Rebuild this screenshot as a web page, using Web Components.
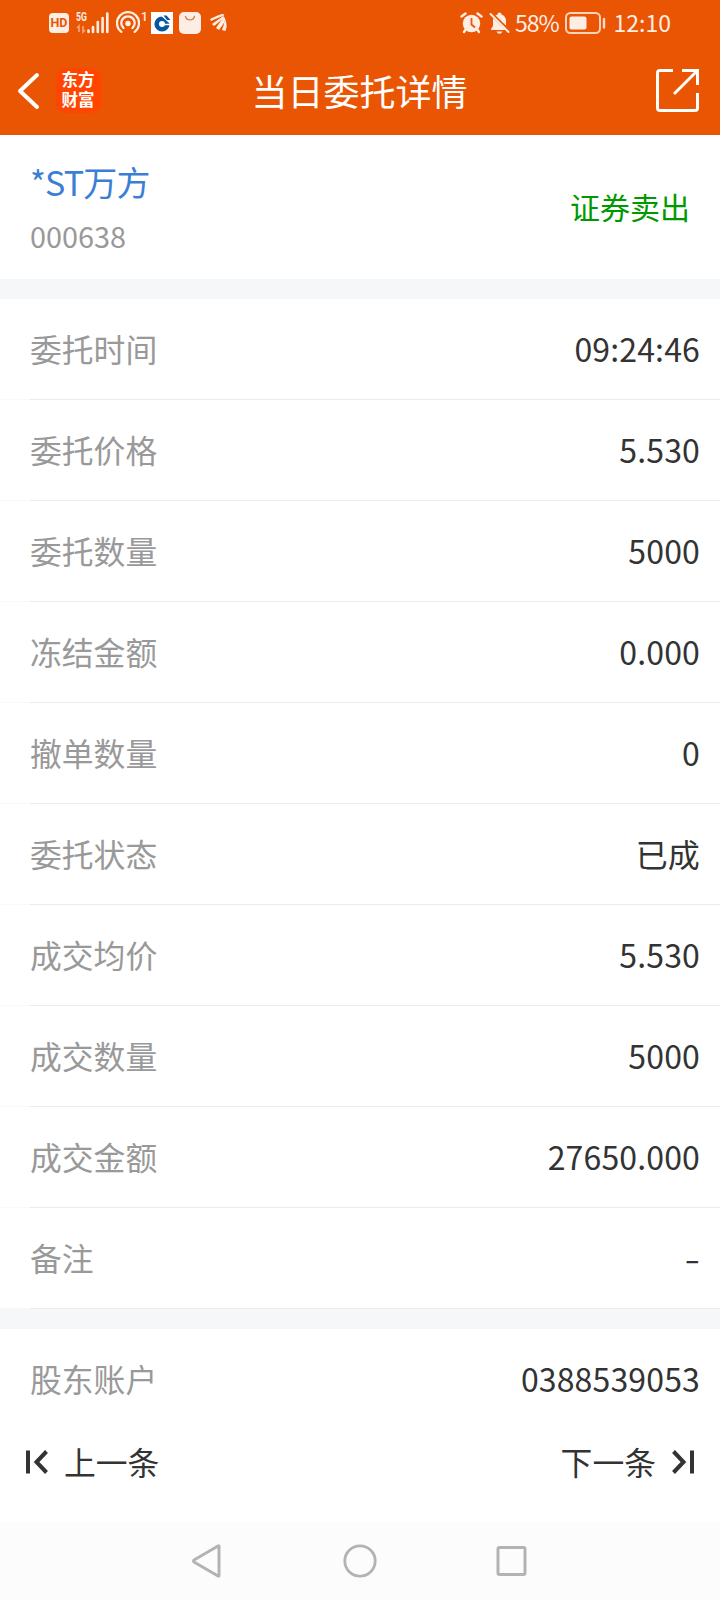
<!DOCTYPE html>
<html lang="zh-CN">
<head>
<meta charset="UTF-8">
<meta name="viewport" content="width=device-width, initial-scale=1.0">
<title>当日委托详情</title>
<style>
    body {
        margin: 0;
        background: #fff;
        color: #333;
        font-family: "Noto Sans CJK SC", "Noto Sans", sans-serif;
    }
</style>
</head>
<body>
<order-page>
    <status-bar slot="top" battery="58%" time="12:10"></status-bar>
    <title-bar slot="top">当日委托详情</title-bar>
    <stock-summary name="*ST万方" code="000638">证券卖出</stock-summary>
    <detail-group id="order"></detail-group>
    <detail-group id="account"></detail-group>
    <pager-bar slot="bottom"></pager-bar>
    <system-nav slot="bottom"></system-nav>
</order-page>

<script>
class OrderPage extends HTMLElement {
    constructor() {
        super();
        this.attachShadow({ mode: 'open' });
        this.shadowRoot.innerHTML = `
            <style>
                :host {
                    display: flex;
                    flex-direction: column;
                    height: 1600px;
                    overflow: hidden;
                }
                header { background: #ea5504; }
                main {
                    flex: 1;
                    min-height: 0;
                    display: flex;
                    flex-direction: column;
                    gap: 20px;
                    background: #f6f7f9;
                    overflow: hidden;
                }
            </style>
            <header><slot name="top"></slot></header>
            <main><slot></slot></main>
            <footer><slot name="bottom"></slot></footer>
        `;
    }
}

class StatusBar extends HTMLElement {
    connectedCallback() {
        this.attachShadow({ mode: 'open' });
        this.shadowRoot.innerHTML = `
            <style>
                :host {
                    display: flex;
                    justify-content: space-between;
                    align-items: center;
                    box-sizing: border-box;
                    height: 46px;
                    padding: 0 49px;
                    color: #fdeee5;
                    font-size: 23px;
                    line-height: 44px;
                }
                .group { display: flex; align-items: center; height: 46px; }
                svg { display: block; flex: none; }
                .hd {
                    width: 20px;
                    height: 20px;
                    border-radius: 4px;
                    background: #fdeee5;
                    color: #ea5504;
                    font: 700 12.5px/20px Roboto, sans-serif;
                    text-align: center;
                }
                .signal { display: flex; margin-left: 7px; width: 33px; height: 22px; }
                .net {
                    width: 11px;
                    font: 700 12px/10px Roboto, sans-serif;
                    transform: scaleX(.72);
                    transform-origin: left;
                }
                .net + svg { margin-left: -11px; }
                .one {
                    align-self: flex-start;
                    width: 6px;
                    margin: 11px 0 0 1px;
                    font: 500 12px/12px Roboto, sans-serif;
                }
                .battery-text { margin-left: 5px; letter-spacing: -1.1px; height: 46px; }
                .time { margin-left: 8px; height: 46px; }
            </style>
            <div class="group">
                <span class="hd">HD</span>
                <span class="signal">
                    <span class="net">5G</span>
                    <svg width="33" height="22" viewBox="0 0 33 22">
                        <path d="M3 20v-6l-2 2M7 14v6l2-2" fill="none" stroke="#f5a578" stroke-width="1.6"/>
                        <path d="M12.5 18.5v1.500M17 15v5M21.800 10v10M26.600 6v14M31.300 1.500v18.500" stroke="#fdeee5" stroke-width="2.600" stroke-linecap="round"/>
                    </svg>
                </span>
                <svg width="24" height="24" viewBox="0 0 24 24" style="margin-left:7px" fill="none" stroke="#fdeee5" stroke-width="2.300" stroke-linecap="round">
                    <path d="M5.300 20.800A11 11 0 1 1 18.700 20.800M7.500 17A6.700 6.700 0 1 1 16.500 17"/>
                    <circle cx="12" cy="12.500" r="2.700" fill="#fdeee5" stroke="none"/>
                </svg>
                <span class="one">1</span>
                <svg width="22" height="22" viewBox="0 0 22 22" style="margin-left:4px">
                    <path fill="#fff" d="M0 0h22v22H0z"/>
                    <circle cx="11" cy="12" r="5.300" fill="none" stroke="#0757a0" stroke-width="4.600"/>
                    <path d="M10 2l11 10" stroke="#fff" stroke-width="2.400"/>
                    <path d="M12.500 3.500h3l4 4.500h-3.500z" fill="#0757a0"/>
                    <path d="M14 12.500h6" stroke="#fff" stroke-width="1.500"/>
                </svg>
                <svg width="22" height="22" viewBox="0 0 22 22" style="margin-left:6px">
                    <rect width="22" height="22" rx="5" fill="#fdeee5"/>
                    <path d="M6.500 4.500a4.700 4.700 0 0 0 9 0" fill="none" stroke="#d98250" stroke-width="1.400" stroke-linecap="round"/>
                </svg>
                <svg width="17" height="18" viewBox="0 0 17 18" style="margin-left:9px" fill="#fdeee5">
                    <path d="M0 5Q8 1 12 0Q16 0 13 2Q7 4 1 7Z"/>
                    <path d="M2 10Q9 5 13 2Q15 3 13 5Q9 8 4 12Z"/>
                    <path d="M6 14Q10 8 14 3Q16 4 14.500 8Q12 12 9 16Z"/>
                    <path d="M12 16Q14 11 15 5Q18 11 15.500 17Z"/>
                </svg>
            </div>
            <div class="group">
                <svg width="23" height="22" viewBox="0 0 23 22">
                    <circle cx="11.500" cy="11.500" r="8.700" fill="#fdeee5"/>
                    <path d="M1.500 4.500l4-3M21.500 4.500l-4-3M4 20l2-3M19 20l-2-3" stroke="#fdeee5" stroke-width="2.400" stroke-linecap="round"/>
                    <path d="M11.500 6v6.500l3.500 3" fill="none" stroke="#ea5504" stroke-width="1.800"/>
                </svg>
                <svg width="21" height="22" viewBox="0 0 21 22" style="margin-left:6px">
                    <path d="M8.500 2.500a2 2 0 0 1 4 0Q17 4 17 9v5l2 3v1H2v-1l2-3V8q0-4 4.500-5.500zM7.500 19.500h6q-1 2.300-3 2.300t-3-2.300z" fill="#fdeee5"/>
                    <path d="M.5 0L20 19" stroke="#ea5504" stroke-width="3.500"/>
                    <path d="M1.500 2L19.500 20" stroke="#fdeee5" stroke-width="1.900" stroke-linecap="round"/>
                </svg>
                <span class="battery-text">${this.getAttribute('battery')}</span>
                <svg width="41" height="22" viewBox="0 0 41 22" style="margin-left:6px">
                    <rect x="1" y="1" width="34" height="20" rx="4.500" fill="none" stroke="#fbd3bb" stroke-width="2"/>
                    <rect x="4.500" y="4.500" width="17" height="13" rx="2" fill="#fdeee5"/>
                    <path d="M39 7v8.500" stroke="#fdd9c4" stroke-width="2.400" stroke-linecap="round"/>
                </svg>
                <span class="time">${this.getAttribute('time')}</span>
            </div>
        `;
    }
}

class TitleBar extends HTMLElement {
    constructor() {
        super();
        this.attachShadow({ mode: 'open' });
        this.shadowRoot.innerHTML = `
            <style>
                :host {
                    display: grid;
                    grid-template-columns: 1fr auto 1fr;
                    align-items: center;
                    box-sizing: border-box;
                    height: 89px;
                    padding: 0 21px 0 17px;
                    color: #fff;
                }
                svg { display: block; }
                .left { display: flex; align-items: center; gap: 16px; }
                .logo {
                    width: 45px;
                    height: 45px;
                    border-radius: 10px;
                    background: #ff4500;
                    font: 700 16.5px/19.5px "Liberation Sans", "Noto Sans CJK SC", sans-serif;
                    text-align: center;
                    box-sizing: border-box;
                    padding: 3px 1px 0 0;
                }
                h1 { margin: 0 0 2px 3px; font-size: 36px; font-weight: 400; line-height: 50px; }
                .share { justify-self: end; }
            </style>
            <div class="left">
                <svg width="23" height="38" viewBox="0 0 23 38">
                    <path d="M20 3L3 19l17 16" fill="none" stroke="#fff" stroke-width="4" stroke-linecap="round" stroke-linejoin="round"/>
                </svg>
                <div class="logo">东方<br>财富</div>
            </div>
            <h1><slot></slot></h1>
            <svg class="share" width="43" height="43" viewBox="0 0 43 43" fill="none" stroke="#fff" stroke-width="3">
                <path d="M17 1.500H4Q1.500 1.500 1.500 4v35q0 2.500 2.500 2.500h35q2.500 0 2.500-2.500V24"/>
                <path d="M26 1.500h15.500V16M41 2L18 25"/>
            </svg>
        `;
    }
}

class StockSummary extends HTMLElement {
    connectedCallback() {
        this.attachShadow({ mode: 'open' });
        this.shadowRoot.innerHTML = `
            <style>
                :host {
                    display: flex;
                    flex: none;
                    justify-content: space-between;
                    align-items: center;
                    box-sizing: border-box;
                    height: 144px;
                    padding: 0 30px;
                    background: #fff;
                }
                .info { padding-top: 4px; }
                .name { color: #3a7fd5; font-size: 34px; letter-spacing: -.8px; line-height: 53px; }
                .code { color: #999; font-size: 28.8px; line-height: 55px; }
                .side { color: #090; font-size: 30px; line-height: 44px; margin-bottom: 2px; }
            </style>
            <div class="info">
                <div class="name">${this.getAttribute('name')}</div>
                <div class="code">${this.getAttribute('code')}</div>
            </div>
            <div class="side"><slot></slot></div>
        `;
    }
}

class DetailGroup extends HTMLElement {
    constructor() {
        super();
        this.attachShadow({ mode: 'open' });
        this.shadowRoot.innerHTML = `
            <style>
                :host { display: block; flex: none; background: #fff; }
            </style>
            <slot></slot>
        `;
    }
}

class DetailRow extends HTMLElement {
    connectedCallback() {
        this.attachShadow({ mode: 'open' });
        this.shadowRoot.innerHTML = `
            <style>
                :host {
                    display: flex;
                    justify-content: space-between;
                    align-items: center;
                    box-sizing: border-box;
                    height: 101px;
                    padding: 0 20px 3px 30px;
                    background: linear-gradient(to right, #f9f9f9 30px, #ebebeb 30px) bottom / 100% 1px no-repeat;
                    font-size: 32px;
                    line-height: 48px;
                }
                .label { color: #999; font-size: 31.8px; }
                .value { letter-spacing: .15px; }
                :host([empty]) .value {
                    transform: scaleX(1.4);
                    transform-origin: right;
                }
            </style>
            <span class="label">${this.getAttribute('label')}</span>
            <span class="value"><slot></slot></span>
        `;
    }
}

class PagerBar extends HTMLElement {
    constructor() {
        super();
        this.attachShadow({ mode: 'open' });
        this.shadowRoot.innerHTML = `
            <style>
                :host {
                    display: flex;
                    justify-content: space-between;
                    align-items: center;
                    box-sizing: border-box;
                    height: 102px;
                    padding: 0 25px 20px;
                    background: #fff;
                    font-size: 31.8px;
                    line-height: 48px;
                }
                span { display: flex; align-items: center; gap: 15px; }
                svg { display: block; margin-top: 2px; }
            </style>
            <span>
                <svg width="24" height="26" viewBox="0 0 24 26" fill="none" stroke="#333" stroke-width="4">
                    <path d="M3 1.500v23M21.500 2.500L11.500 13l10 10.500"/>
                </svg>
                上一条
            </span>
            <span>
                下一条
                <svg width="24" height="26" viewBox="0 0 24 26" fill="none" stroke="#333" stroke-width="4">
                    <path d="M21 1.500v23M2.500 2.500L12.500 13L2.500 23.500"/>
                </svg>
            </span>
        `;
    }
}

class SystemNav extends HTMLElement {
    constructor() {
        super();
        this.attachShadow({ mode: 'open' });
        this.shadowRoot.innerHTML = `
            <style>
                :host {
                    display: flex;
                    justify-content: center;
                    align-items: center;
                    gap: 118px;
                    height: 78px;
                    background: #fcfcfc;
                }
                svg { display: block; }
            </style>
            <svg width="34" height="34" viewBox="0 0 34 34" fill="none" stroke="#b3b3b3" stroke-width="3" stroke-linejoin="round">
                <path d="M28 2.500v29q0 1-1 .5L3 18q-1-1 0-2L27 2q1-.5 1 .5z"/>
            </svg>
            <svg width="34" height="34" viewBox="0 0 34 34" fill="none" stroke="#b3b3b3" stroke-width="2.800">
                <circle cx="17" cy="17" r="15.200"/>
            </svg>
            <svg width="34" height="34" viewBox="0 0 34 34" fill="none" stroke="#b3b3b3" stroke-width="3">
                <rect x="3" y="3.500" width="27" height="27" rx="1.500"/>
            </svg>
        `;
    }
}

customElements.define('order-page', OrderPage);
customElements.define('status-bar', StatusBar);
customElements.define('title-bar', TitleBar);
customElements.define('stock-summary', StockSummary);
customElements.define('detail-group', DetailGroup);
customElements.define('detail-row', DetailRow);
customElements.define('pager-bar', PagerBar);
customElements.define('system-nav', SystemNav);

const orderRows = [
    ['委托时间', '09:24:46'],
    ['委托价格', '5.530'],
    ['委托数量', '5000'],
    ['冻结金额', '0.000'],
    ['撤单数量', '0'],
    ['委托状态', '已成'],
    ['成交均价', '5.530'],
    ['成交数量', '5000'],
    ['成交金额', '27650.000'],
    ['备注', '-']
];
const accountRows = [['股东账户', '0388539053']];

function renderRows(group, rows) {
    rows.forEach(([label, value]) => {
        const row = document.createElement('detail-row');
        row.setAttribute('label', label);
        row.toggleAttribute('empty', value === '-');
        row.textContent = value;
        group.appendChild(row);
    });
}

renderRows(document.querySelector('#order'), orderRows);
renderRows(document.querySelector('#account'), accountRows);
</script>
</body>
</html>
